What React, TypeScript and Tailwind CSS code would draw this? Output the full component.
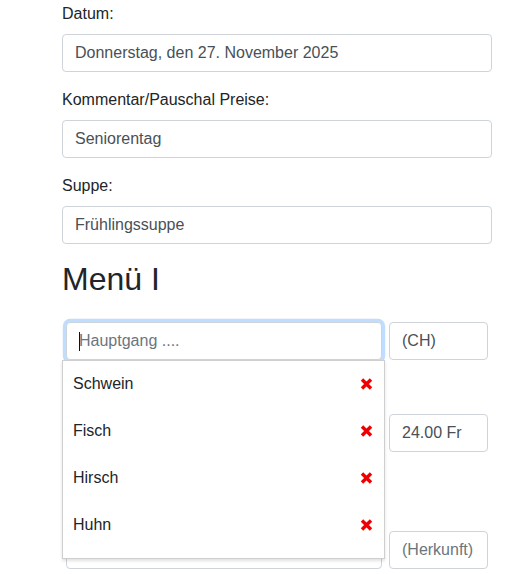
import React from "react";

const fields = [
  { label: "Datum:", value: "Donnerstag, den 27. November 2025" },
  { label: "Kommentar/Pauschal Preise:", value: "Seniorentag" },
  { label: "Suppe:", value: "Frühlingssuppe" },
];

const options = ["Schwein", "Fisch", "Hirsch", "Huhn"];

const inputCls =
  "block w-full h-[38px] rounded-[4px] border border-[#ced4da] bg-white px-3 text-[16px] text-[#495057] outline-none placeholder:text-[#6c757d]";

const RemoveIcon = () => (
  <svg width="13" height="12" viewBox="0 0 13 12" aria-hidden="true">
    <path d="M2 1.5 L11 10.5 M11 1.5 L2 10.5" stroke="#ee0000" strokeWidth="3.4" />
  </svg>
);

export default function App() {
  return (
    <div className="min-h-[574px] overflow-hidden bg-white font-['Liberation_Sans',Arial,sans-serif] text-[16px] leading-6 text-[#212529]">
      <div className="ml-[62px] w-[430px] pt-[2px]">
        {fields.map((f) => (
          <div key={f.label} className="mb-4">
            <label className="mb-2 block">{f.label}</label>
            <input className={inputCls} defaultValue={f.value} readOnly />
          </div>
        ))}

        <h2 className="text-[32px] font-normal leading-[38px]">Menü I</h2>

        <div className="relative mt-[24px] px-[4px]">
          <div className="flex gap-[7px]">
            <div className="relative w-[316px]">
              <input
                className={`${inputCls} border-[#80bdff] shadow-[0_0_0_0.2rem_rgba(0,123,255,0.25)]`}
                placeholder="Hauptgang ...."
                readOnly
              />
              <span className="absolute left-[13px] top-[10px] h-[19px] w-px bg-[#111]" />
            </div>
            <div className="w-[99px]">
              <input className={inputCls} defaultValue="(CH)" readOnly />
            </div>
          </div>

          <div className="mt-[54px] flex gap-[7px]">
            <div className="w-[316px]">
              <input className={inputCls} placeholder="Beilage ...." readOnly />
            </div>
            <div className="w-[99px]">
              <input className={inputCls} defaultValue="24.00 Fr" readOnly />
            </div>
          </div>

          <div className="mt-[79px] flex gap-[7px]">
            <div className="w-[316px]">
              <input className={inputCls} placeholder="Gemüse ...." readOnly />
            </div>
            <div className="w-[99px]">
              <input className={inputCls} placeholder="(Herkunft)" readOnly />
            </div>
          </div>

          <ul className="absolute left-0 top-[38px] z-10 h-[199px] w-[323px] border border-[#cfcfcf] bg-white shadow-[0_2px_3px_rgba(0,0,0,0.12)]">
            {options.map((o) => (
              <li key={o} className="flex h-[47px] items-center justify-between pb-[2px] pl-[10px] pr-[11px]">
                <span>{o}</span>
                <RemoveIcon />
              </li>
            ))}
          </ul>
        </div>
      </div>
    </div>
  );
}
